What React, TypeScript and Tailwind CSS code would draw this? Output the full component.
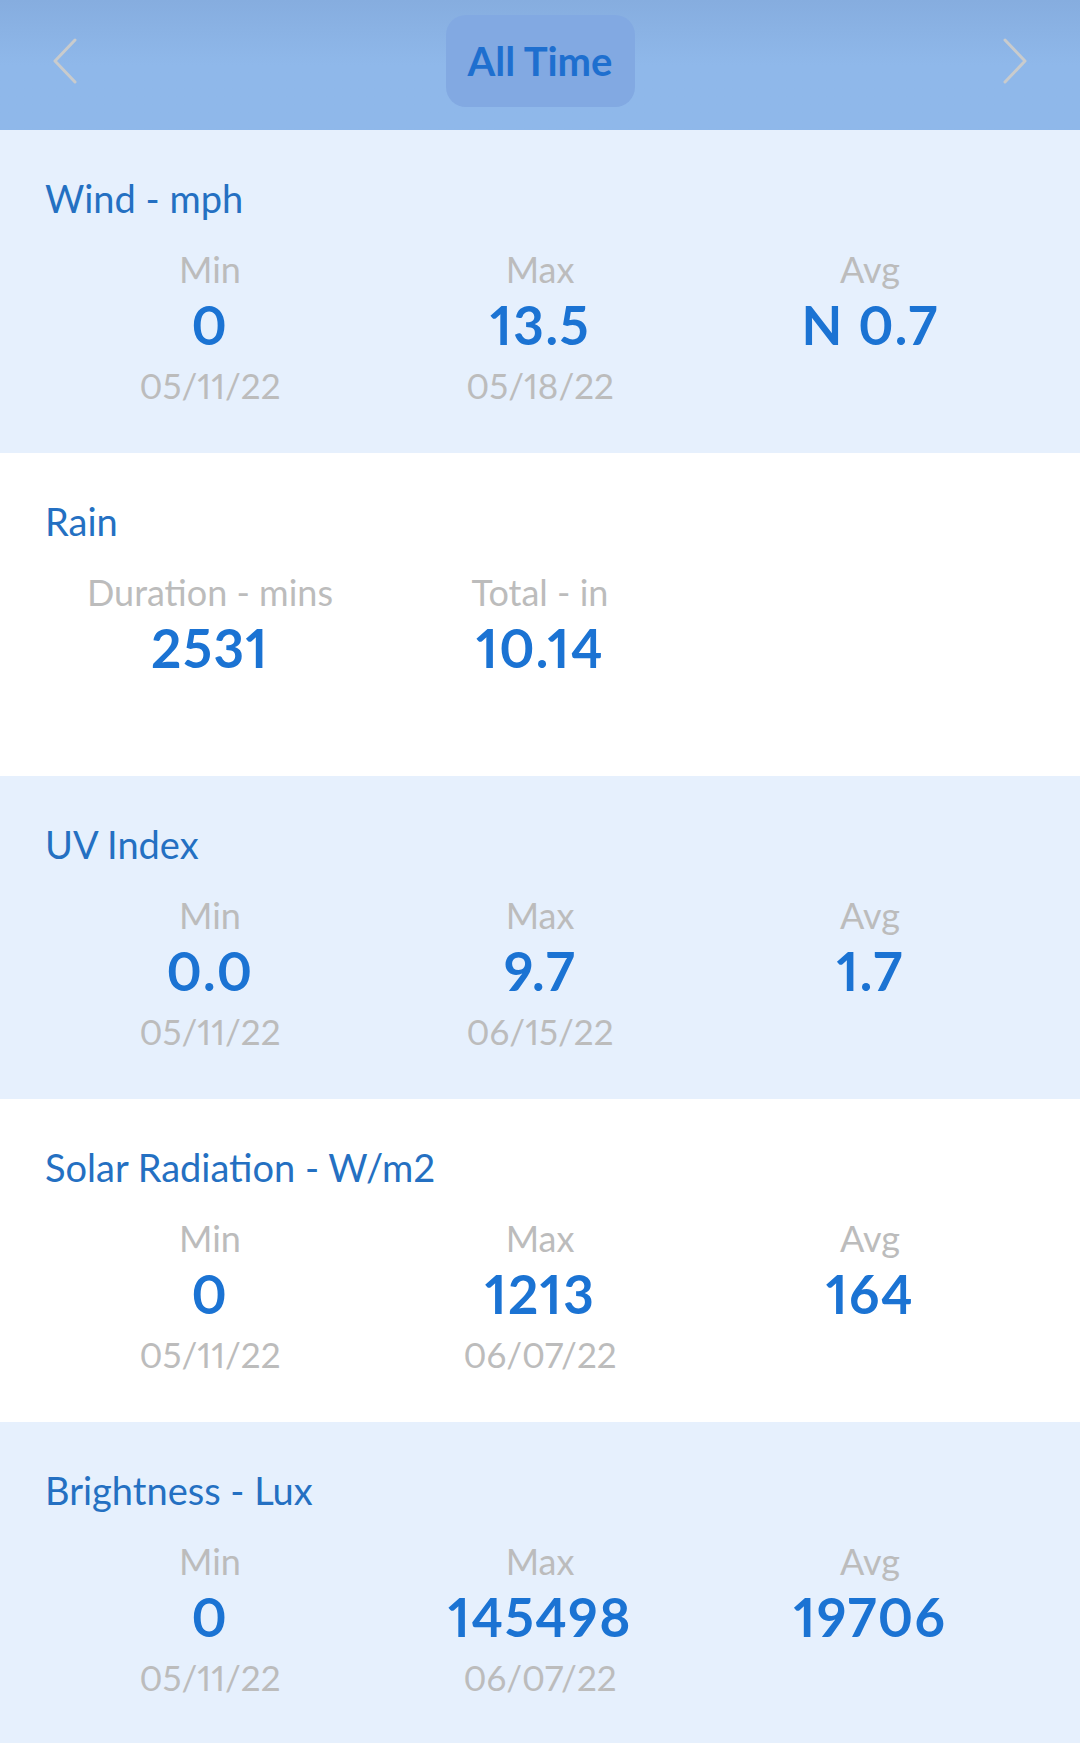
import React from "react";

type Stat = {
  label: string;
  value: string;
  date?: string;
};

type Section = {
  title: string;
  tinted: boolean;
  stats: Stat[];
};

const sections: Section[] = [
  {
    title: "Wind - mph",
    tinted: true,
    stats: [
      { label: "Min", value: "0", date: "05/11/22" },
      { label: "Max", value: "13.5", date: "05/18/22" },
      { label: "Avg", value: "N 0.7" },
    ],
  },
  {
    title: "Rain",
    tinted: false,
    stats: [
      { label: "Duration - mins", value: "2531" },
      { label: "Total - in", value: "10.14" },
    ],
  },
  {
    title: "UV Index",
    tinted: true,
    stats: [
      { label: "Min", value: "0.0", date: "05/11/22" },
      { label: "Max", value: "9.7", date: "06/15/22" },
      { label: "Avg", value: "1.7" },
    ],
  },
  {
    title: "Solar Radiation - W/m2",
    tinted: false,
    stats: [
      { label: "Min", value: "0", date: "05/11/22" },
      { label: "Max", value: "1213", date: "06/07/22" },
      { label: "Avg", value: "164" },
    ],
  },
  {
    title: "Brightness - Lux",
    tinted: true,
    stats: [
      { label: "Min", value: "0", date: "05/11/22" },
      { label: "Max", value: "145498", date: "06/07/22" },
      { label: "Avg", value: "19706" },
    ],
  },
];

function Chevron({ right }: { right?: boolean }) {
  return (
    <svg width="26" height="46" viewBox="0 0 26 46" fill="none" aria-hidden="true">
      <path
        d={right ? "M3 2 L23 23 L3 44" : "M23 2 L3 23 L23 44"}
        stroke="#c9cbcc"
        strokeWidth="3"
        strokeLinecap="round"
        strokeLinejoin="round"
      />
    </svg>
  );
}

function Header() {
  return (
    <header className="flex h-[130px] items-center justify-between bg-gradient-to-b from-[#86addf] via-[#8fb8ea] to-[#8fb8ea] px-[52px] pb-[8px]">
      <button aria-label="previous" className="flex items-center">
        <Chevron />
      </button>
      <div className="flex h-[92px] w-[189px] items-center justify-center rounded-[20px] bg-[#82a9e2]">
        <span className="text-[40px] font-bold leading-none text-[#1e6fcf]">All Time</span>
      </div>
      <button aria-label="next" className="flex items-center">
        <Chevron right />
      </button>
    </header>
  );
}

function StatBlock({ section }: { section: Section }) {
  return (
    <section
      className={`h-[323px] px-[45px] pt-[49px] ${section.tinted ? "bg-[#e6f0fd]" : "bg-white"}`}
    >
      <h2 className="text-[38px] font-normal leading-none text-[#2470c2]">{section.title}</h2>
      <div className="mt-[34px] grid grid-cols-3">
        {section.stats.map((stat) => (
          <div key={stat.label} className="flex flex-col items-center">
            <span className="text-[36px] leading-none text-[#bcbcbc]">{stat.label}</span>
            <span className="mt-[11px] text-[53px] font-bold leading-none tracking-[1.5px] text-[#1b73d3] proportional-nums">
              {stat.value}
            </span>
            {stat.date && (
              <span className="mt-[17px] text-[35px] leading-none text-[#bcbcbc] proportional-nums">
                {stat.date}
              </span>
            )}
          </div>
        ))}
      </div>
    </section>
  );
}

export default function App() {
  return (
    <div className="min-h-[1743px] w-[1080px] bg-white font-['Lato',sans-serif]">
      <Header />
      {sections.map((section) => (
        <StatBlock key={section.title} section={section} />
      ))}
    </div>
  );
}
